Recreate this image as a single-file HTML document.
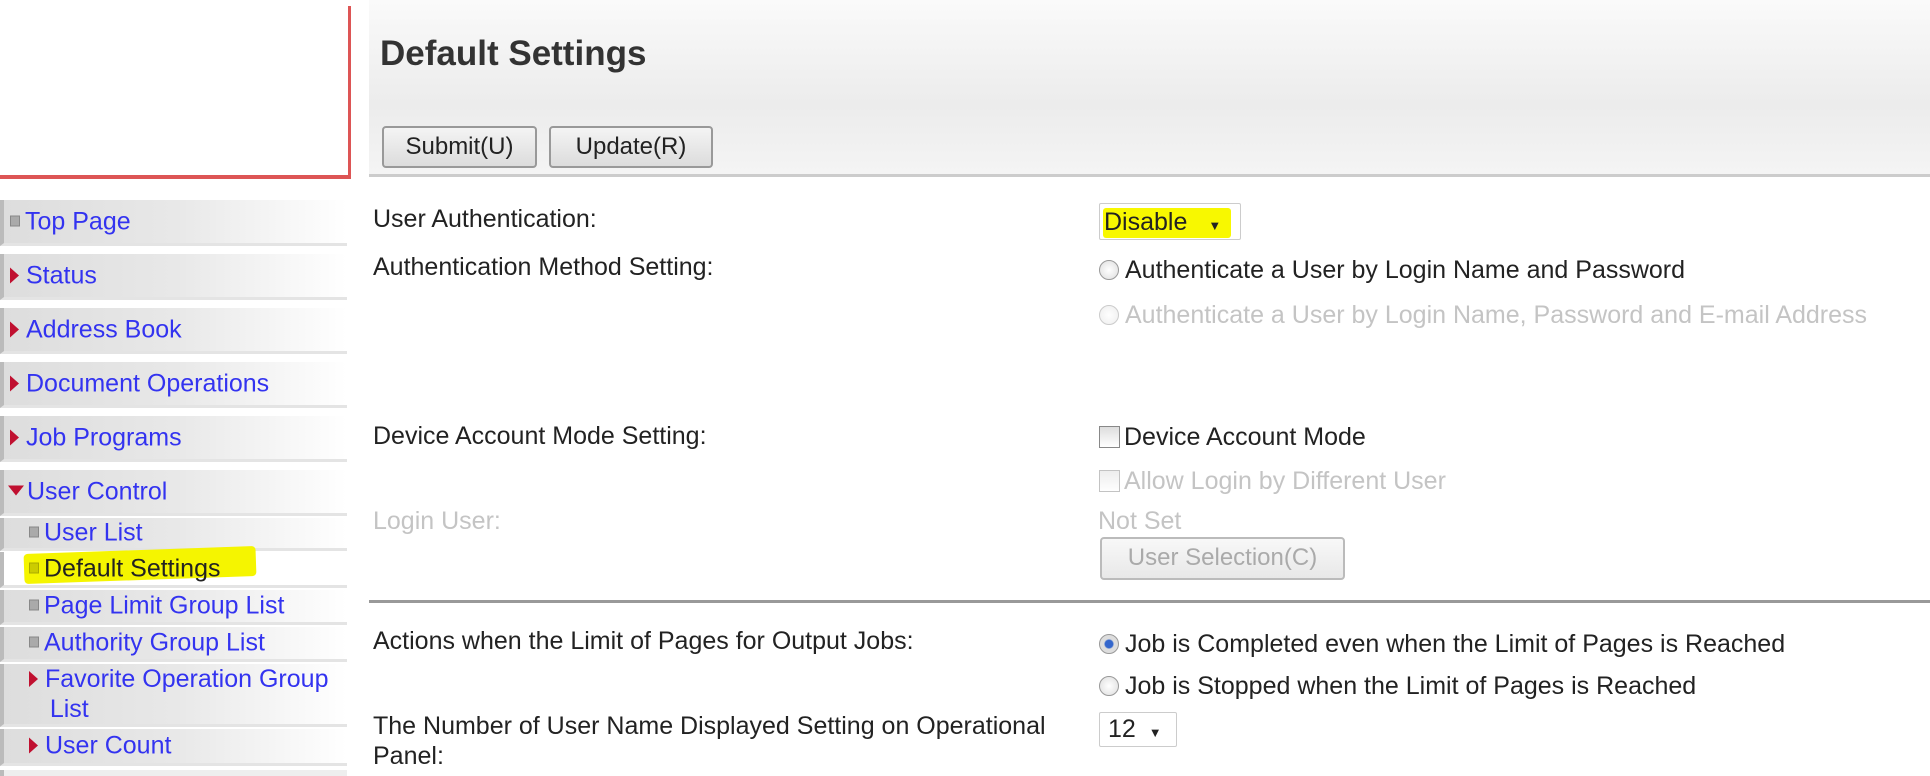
<!DOCTYPE html>
<html><head><style>
*{margin:0;padding:0;box-sizing:border-box}
body{width:1930px;height:776px;background:#fff;font-family:"Liberation Sans",Arial,sans-serif;position:relative;overflow:hidden;color:#222}
.a{position:absolute;white-space:nowrap}
.logo{left:0;top:6px;width:351px;height:173px;border-right:3px solid #d55;border-bottom:4px solid #d55}
.hdr{left:369px;top:0;width:1561px;height:177px;background:linear-gradient(#fafafa,#ececec 60%,#f4f4f4);border-bottom:3px solid #ccc}
.title{left:380px;top:34px;font-size:35px;font-weight:bold;color:#333}
.btn{top:126px;height:42px;border:2px solid #999;border-radius:4px;background:linear-gradient(#f4f4f4,#dcdcdc);font-size:24px;color:#222;text-align:center;line-height:38px}
.nav{left:0;width:347px;background:linear-gradient(90deg,#ddd,#e8e8e8 50%,#fff);border-left:4px solid #bbb;border-bottom:3px solid #e4e4e4;font-size:25px;color:#3333f0}
.nav span{position:absolute;top:50%;transform:translateY(-50%)}
.sq{display:inline-block;width:10px;height:11px;background:#aaa;border:1px solid #888;margin-right:5px;vertical-align:3px}
.tri{display:inline-block;width:0;height:0;border-top:8px solid transparent;border-bottom:8px solid transparent;border-left:9px solid #c01030;margin-right:7px;vertical-align:0}
.lbl{left:373px;font-size:25px;color:#222}
.v{left:1099px;font-size:25px;color:#222}
.g{color:#c4c4c4}
.rad{display:inline-block;width:20px;height:20px;border-radius:50%;border:1px solid #999;background:radial-gradient(#fff,#ddd);margin-right:6px;vertical-align:-2px}
.chk{display:inline-block;width:21px;height:22px;border:1px solid #888;background:linear-gradient(#ddd,#fff);margin-right:4px;vertical-align:-3px}
.sel{border:1px solid #ccc;border-radius:2px;background:#fff}
</style></head><body>
<div class="a logo"></div>
<div class="a hdr"></div>
<div class="a title">Default Settings</div>
<div class="a btn" style="left:382px;width:155px">Submit(U)</div>
<div class="a btn" style="left:549px;width:164px">Update(R)</div>

<div class="a nav" style="top:200px;height:46px"><span style="left:6px"><i class="sq"></i>Top Page</span></div>
<div class="a nav" style="top:254px;height:46px"><span style="left:6px"><i class="tri"></i>Status</span></div>
<div class="a nav" style="top:308px;height:46px"><span style="left:6px"><i class="tri"></i>Address Book</span></div>
<div class="a nav" style="top:362px;height:46px"><span style="left:6px"><i class="tri"></i>Document Operations</span></div>
<div class="a nav" style="top:416px;height:46px"><span style="left:6px"><i class="tri"></i>Job Programs</span></div>
<div class="a nav" style="top:470px;height:46px"><span style="left:4px"><i class="tri" style="border-left:8px solid transparent;border-right:8px solid transparent;border-top:10px solid #c01030;border-bottom:0;vertical-align:4px;margin-right:3px"></i>User Control</span></div>
<div class="a nav" style="top:518px;height:33px"><span style="left:25px"><i class="sq"></i>User List</span></div>
<div class="a" style="left:24px;top:550px;width:232px;height:30px;background:#f5f500;border-radius:4px;transform:rotate(-2deg)"></div>
<div class="a nav" style="top:552px;height:36px;background:transparent"><span style="left:25px;color:#222"><i class="sq" style="background:#cc0;border-color:#aa0"></i>Default Settings</span></div>
<div class="a nav" style="top:590px;height:35px"><span style="left:25px"><i class="sq"></i>Page Limit Group List</span></div>
<div class="a nav" style="top:627px;height:35px"><span style="left:25px"><i class="sq"></i>Authority Group List</span></div>
<div class="a nav" style="top:664px;height:63px"><span style="left:25px;white-space:normal;line-height:30px;width:330px"><i class="tri"></i>Favorite Operation Group<br>&nbsp;&nbsp;&nbsp;List</span></div>
<div class="a nav" style="top:729px;height:37px"><span style="left:25px"><i class="tri"></i>User Count</span></div>
<div class="a" style="left:0;top:770px;width:347px;height:6px;border-left:4px solid #bbb;background:#eee"></div>

<div class="a lbl" style="top:205px">User Authentication:</div>
<div class="a sel" style="left:1099px;top:203px;width:142px;height:37px"></div>
<div class="a" style="left:1103px;top:208px;width:128px;height:30px;background:#f8f800;border-radius:3px"></div>
<div class="a v" style="left:1104px;top:208px">Disable <span style="font-size:13px;margin-left:14px">▼</span></div>
<div class="a lbl" style="top:253px">Authentication Method Setting:</div>
<div class="a v" style="top:256px"><i class="rad"></i>Authenticate a User by Login Name and Password</div>
<div class="a v g" style="top:301px"><i class="rad" style="opacity:.5"></i>Authenticate a User by Login Name, Password and E-mail Address</div>

<div class="a lbl" style="top:422px">Device Account Mode Setting:</div>
<div class="a v" style="top:423px"><i class="chk"></i>Device Account Mode</div>
<div class="a v g" style="top:467px"><i class="chk" style="opacity:.5"></i>Allow Login by Different User</div>
<div class="a lbl g" style="top:507px">Login User:</div>
<div class="a v g" style="left:1098px;top:507px">Not Set</div>
<div class="a btn g" style="left:1100px;top:537px;width:245px;height:43px;border-color:#bbb;background:linear-gradient(#f8f8f8,#e8e8e8);color:#aaa">User Selection(C)</div>

<div class="a" style="left:369px;top:600px;width:1561px;height:3px;background:#999"></div>
<div class="a lbl" style="top:627px">Actions when the Limit of Pages for Output Jobs:</div>
<div class="a v" style="top:630px"><i class="rad" style="background:radial-gradient(#36c 30%,#ddd 40%)"></i>Job is Completed even when the Limit of Pages is Reached</div>
<div class="a v" style="top:672px"><i class="rad"></i>Job is Stopped when the Limit of Pages is Reached</div>
<div class="a lbl" style="top:711px;line-height:30px">The Number of User Name Displayed Setting on Operational<br>Panel:</div>
<div class="a sel" style="left:1099px;top:712px;width:78px;height:35px"></div>
<div class="a v" style="left:1108px;top:715px">12 <span style="font-size:13px;margin-left:6px">▼</span></div>
</body></html>
